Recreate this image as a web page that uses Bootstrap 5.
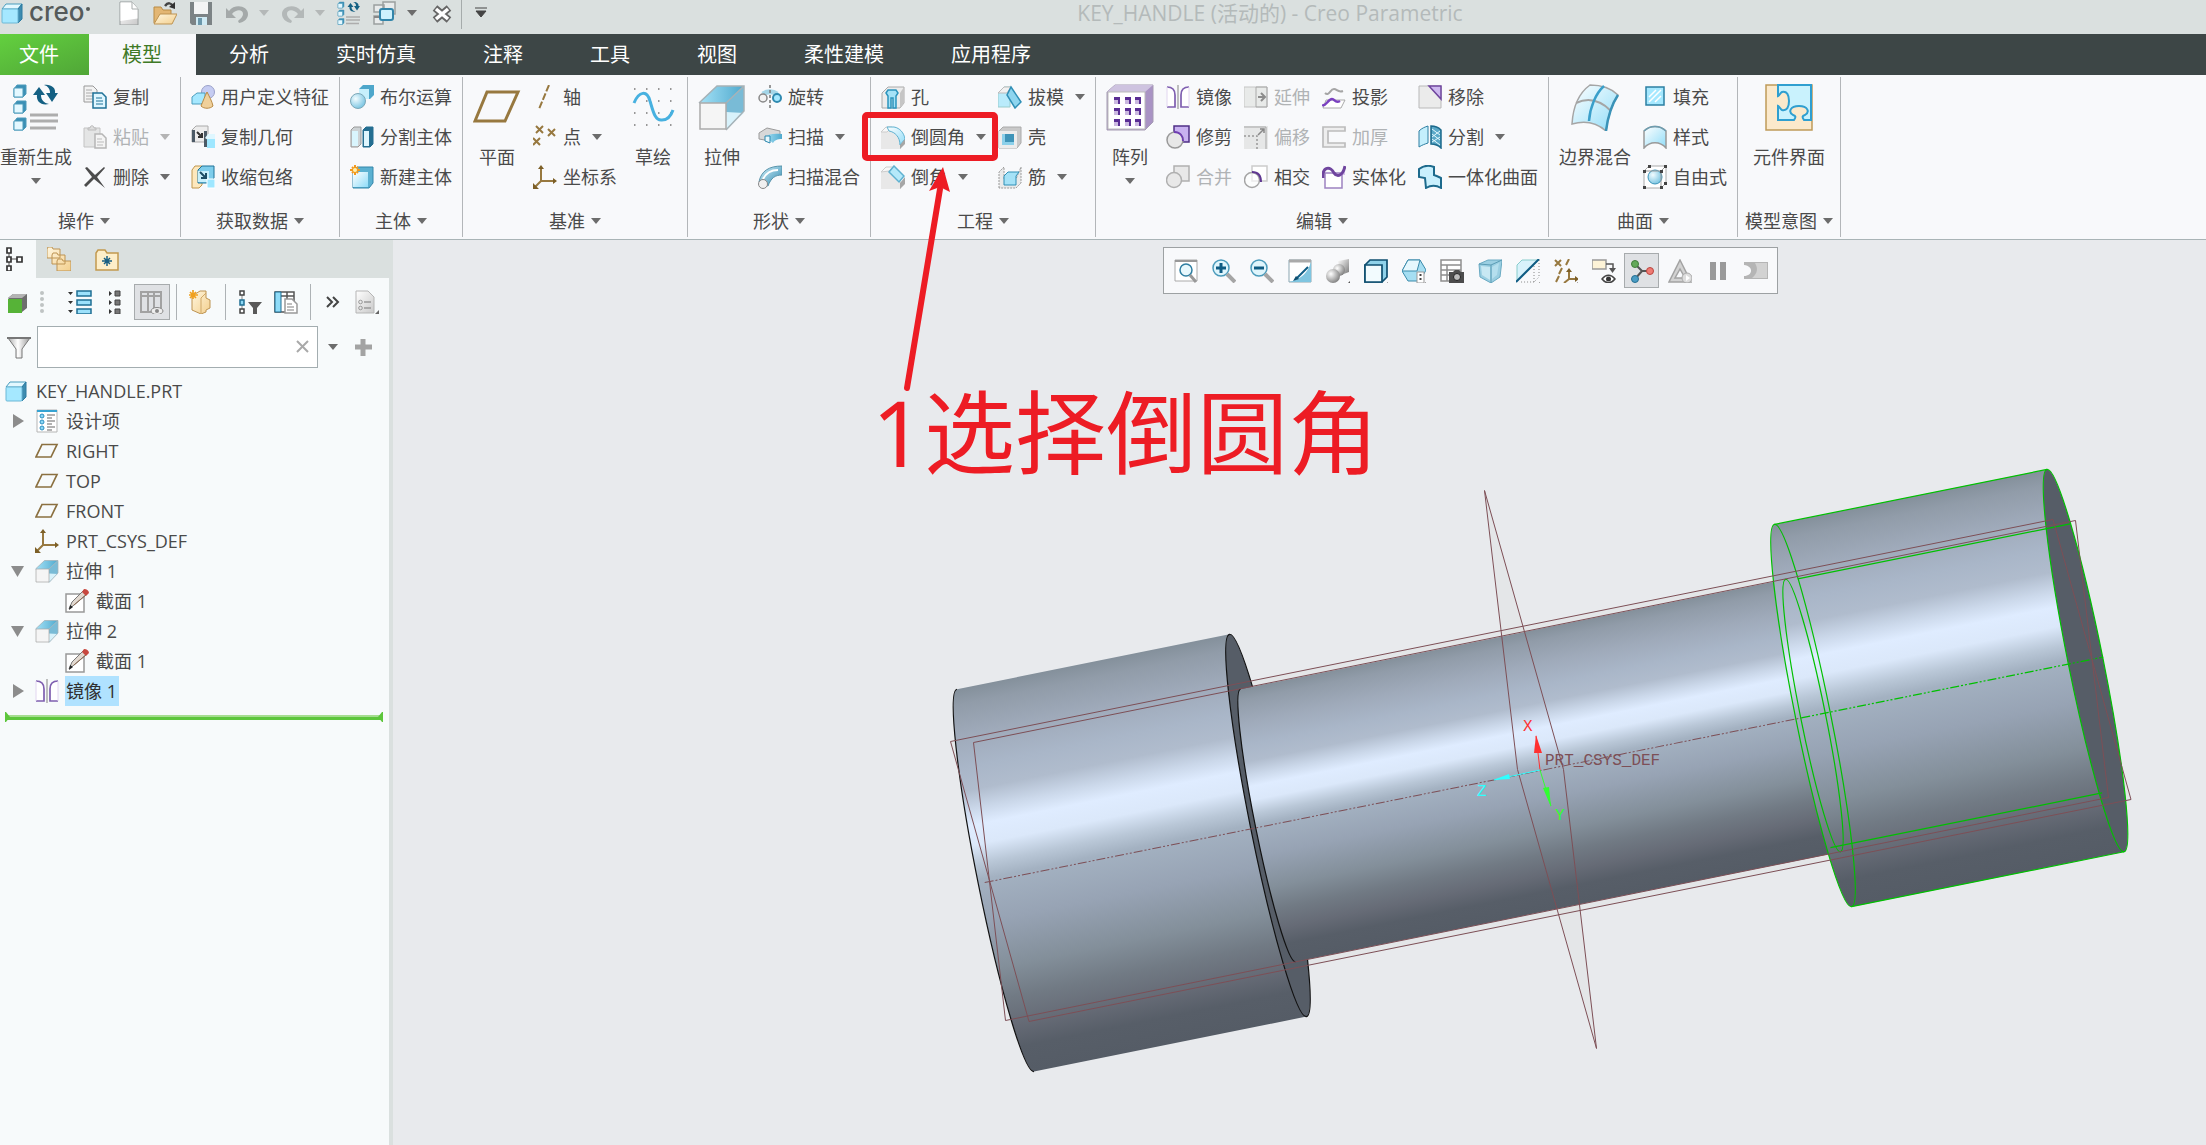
<!DOCTYPE html>
<html lang="zh-CN">
<head>
<meta charset="utf-8">
<meta name="viewport" content="width=device-width, initial-scale=1">
<title>KEY_HANDLE (活动的) - Creo Parametric</title>
<link href="https://cdn.jsdelivr.net/npm/bootstrap@5.3.0/dist/css/bootstrap.min.css" rel="stylesheet">
<style>
  :root { --chrome: #dae0df; --paper: #f8f9fb; --ink: #4a4a4a; --line: #a9b4b6; }
  body { font-family: "Open Sans", "Noto Sans CJK SC", sans-serif; font-size: 18px; line-height: 24px; color: var(--ink); background: var(--paper); }
  svg { display: block; flex: none; }
  .ic { width: 24px; height: 24px; }
  .ic-big { width: 48px; height: 48px; }
  .tri { width: 10px; height: 6px; background: #6c6c6c; clip-path: polygon(0 0, 100% 0, 50% 100%); flex: none; }
  .tri-off { background: #b4b8b8; }
  .plain { border: 0; padding: 0; background: none; color: inherit; font-size: 18px; line-height: 24px; border-radius: 0; }

  .titlebar { height: 34px; background: var(--chrome); padding-bottom: 8px; }
  .brand { gap: 5px; width: 117px; }
  .brand-word { font-family: Inter, sans-serif; font-size: 26px; font-weight: 500; line-height: 24px; color: #555a5a; padding-bottom: 3px; }
  .brand-dot { width: 4px; height: 4px; border-radius: 50%; background: #555a5a; margin: 0 0 9px -4px; }
  .quick { gap: 12px; }
  .quick .tri { margin-left: -2px; }
  .quick-rule { width: 1px; height: 32px; background: #a5abab; margin-left: -4px; }
  .doc-title { font-size: 21px; color: #b4baba; padding-right: 154px; }

  .ribbon-tabs { background: #3d4646; height: 41px; }
  .ribbon-tabs a { font-size: 20px; line-height: 40px; color: #fff; padding: 1px 34px 0 33px; text-decoration: none; }
  .ribbon-tabs a.file-tab { padding: 1px 30px 0 19px; background: linear-gradient(160deg, #63d03f, #50a637); }
  .ribbon-tabs a.on { background: var(--paper); color: #3f7a26; }

  .ribbon { background: var(--paper); border-bottom: 1px solid var(--line); padding: 2px 0; }
  .grp { border-right: 1px solid #b3b6b9; }
  .grp-body { gap: 12px; padding: 0 10px; height: 120px; }
  .grp-first .grp-body { padding: 0 10px 0 0; gap: 11px; }
  .grp-first .grp-name { margin-right: 12px; }
  .grp-name { height: 40px; gap: 6px; padding: 8px 7px 0; }
  .cmd { height: 40px; display: flex; align-items: center; gap: 6px; white-space: nowrap; }
  .cmd .tri { margin-left: 5px; }
  .cmd:disabled { color: #b0b3b5; opacity: 1; }
  .cmd:disabled .tri { background: #b4b4b4; }
  .cmd-big { display: flex; flex-direction: column; align-items: center; justify-content: flex-start; padding-top: 6px; min-width: 48px; white-space: nowrap; }
  .cmd-big span { margin-top: 14px; }
  .cmd-big .tri { margin-top: 9px; }

  .side { width: 393px; border-right: 4px solid var(--chrome); background: #f7fafb; }
  .side-tabs { height: 38px; background: var(--chrome); }
  .side-tabs button { width: 48px; padding-right: 2px; display: flex; justify-content: center; align-items: center; }
  .side-tabs .on { width: 36px; background: #f7fafb; padding-right: 8px; }
  .side-tools { height: 36px; margin-top: 6px; }
  .tool { width: 36px; height: 36px; display: flex; align-items: center; justify-content: center; }
  .tool-slim { width: 32px; }
  .tool-on { background: #dfe1e4; border: 1px solid #a7abad; }
  .tool-rule { width: 1px; background: #adb2b5; margin: 0 6px; }
  .grip { width: 26px; padding-left: 4px; }
  .filter { padding: 6px 0 8px 7px; gap: 6px; }
  .filter-box { width: 281px; }
  .filter-box input { height: 42px; border: 1px solid #a3adb0; border-radius: 0; font-size: 18px; }
  .filter-clear { right: 3px; top: 9px; }
  .tree li { height: 30px; display: flex; align-items: center; gap: 6px; padding-left: 35px; }
  .tree .root-item { padding-left: 4px; gap: 8px; }
  .tree .deep { padding-left: 65px; }
  .tree .has-arrow { padding-left: 11px; }
  .tree .arrow { width: 14px; height: 14px; margin-right: 4px; }
  .tree .tag { padding: 0 2px 0 1px; line-height: 30px; }
  .tree .picked { background: #b0e2ff; color: #2f2f2f; }
  .insert-mark { width: 378px; height: 10px; margin: 6px 0 0 5px; }

  .stage { background: #e8eaed; overflow: hidden; }
  .view-bar { position: absolute; left: 770px; top: 7px; background: var(--paper); border: 1px solid #9da1a3; padding: 5px 4px; gap: 3px; }
  .view-bar .tool { width: 35px; height: 35px; }
  .note { position: absolute; left: 479px; top: 132px; font-family: "Noto Sans", "Noto Sans CJK SC", sans-serif; font-size: 91px; line-height: 120px; color: #ed1c24; white-space: nowrap; }
  .note-arrow { position: absolute; left: 860px; top: 105px; pointer-events: none; }
</style>
<script src="https://cdn.jsdelivr.net/npm/bootstrap@5.3.0/dist/js/bootstrap.bundle.min.js"></script>
</head>
<body class="d-flex flex-column min-vh-100 position-relative">

<svg width="0" height="0" class="position-absolute" aria-hidden="true">
  <defs>
    <linearGradient id="gBlue" x1="0" y1="0" x2="1" y2="1"><stop offset="0" stop-color="#fff"/><stop offset="1" stop-color="#8fdcf8"/></linearGradient>
    <linearGradient id="gSky" x1="0" y1="0" x2="1" y2="0"><stop offset="0" stop-color="#a5e2f7"/><stop offset="1" stop-color="#4fa9cd"/></linearGradient>
    <linearGradient id="gGray" x1="0" y1="0" x2="1" y2="1"><stop offset="0" stop-color="#fff"/><stop offset="1" stop-color="#c9c9c9"/></linearGradient>
    <linearGradient id="gMetal" x1="0" y1="0" x2="1" y2="1"><stop offset="0" stop-color="#fff"/><stop offset="1" stop-color="#777"/></linearGradient>
    <linearGradient id="gFunnel" x1="0" y1="0" x2="1" y2="0"><stop offset="0" stop-color="#aaa"/><stop offset=".45" stop-color="#fff"/><stop offset="1" stop-color="#999"/></linearGradient>
    <linearGradient id="gTan" x1="0" y1="0" x2="1" y2="1"><stop offset="0" stop-color="#fff6df"/><stop offset="1" stop-color="#f3cf8d"/></linearGradient>
    <linearGradient id="gDeep" x1="0" y1="0" x2="1" y2="1"><stop offset="0" stop-color="#d8f4fd"/><stop offset="1" stop-color="#2b87ae"/></linearGradient>
    <radialGradient id="gBall" cx=".35" cy=".35" r=".75"><stop offset="0" stop-color="#f2fcff"/><stop offset="1" stop-color="#6fc0df"/></radialGradient>
    <radialGradient id="gBallG" cx=".35" cy=".35" r=".75"><stop offset="0" stop-color="#fff"/><stop offset="1" stop-color="#777"/></radialGradient>

    <symbol id="part" viewBox="0 0 24 24"><path d="M2 8l4-5h16l-4 5z" fill="#e3f8ff" stroke="#4a9dbd"/><path d="M18 8l4-5v15l-4 4z" fill="#3e8cb0" stroke="#2c7ba1"/><rect x="2" y="8" width="16" height="14" rx="1" fill="#a5e8ff" stroke="#6cb8d6"/></symbol>
    <symbol id="newfile" viewBox="0 0 24 24"><path d="M3 1h12l6 7v16H3z" fill="url(#gGray)" stroke="#979c9c"/><path d="M3.500 1.500h11.500v6h5.500v10L3.500 20z" fill="#fff"/><path d="M15 1v7h6" fill="#fff" stroke="#a8adad"/></symbol>
    <symbol id="open" viewBox="0 0 24 24"><path d="M1 22V6h7l2 3h8v4" fill="#e3b673" stroke="#b98b45"/><path d="M1 23l6-10h17l-5 10z" fill="url(#gTan)" stroke="#bd9352"/><path d="M12 5c3-4 6-3 8 0" fill="none" stroke="#444" stroke-width="2.500"/><path d="M22 1v7l-6-2z" fill="#333"/></symbol>
    <symbol id="save" viewBox="0 0 24 24"><path d="M1 1h22v23H3l-2-2z" fill="#7c8385"/><path d="M5 1h14v12H5z" fill="#f3f4f4"/><path d="M7 16h11v8H7z" fill="#cfeaf3"/><path d="M9 17h4v7H9z" fill="#6c98ab"/></symbol>
    <symbol id="undo" viewBox="0 0 24 24"><path d="M1 7v10h10l-4-4c4-5 11-5 11 0 0 3-3 5-5 7l1 2c6-1 9-5 9-9 0-8-13-11-19-3z" fill="#a4a9a9"/></symbol>
    <symbol id="redo" viewBox="0 0 24 24"><path d="M23 7v10H13l4-4c-4-5-11-5-11 0 0 3 3 5 5 7l-1 2c-6-1-9-5-9-9 0-8 13-11 19-3z" fill="#b3b8b8"/></symbol>
    <symbol id="regen" viewBox="0 0 48 48"><g stroke="#4d9bbb"><path d="M2 6l3-4h9v9l-3 3H2zM2 22l3-4h9v9l-3 3H2zM2 39l3-4h9v9l-3 3H2z" fill="#3b8fb5"/><path d="M2 5h9v9H2zM2 21h9v9H2zM2 38h9v9H2z" fill="#e4f8ff"/></g><path d="M21 12l6-8 6 8h-4c0 5 3 8 8 9-8 2-13-3-12-9zM46 10l-6 9-6-9h4c0-4-2-7-6-8 7-1 12 3 11 8z" fill="#146083"/><path d="M18 32h28M18 38h28M18 45h26" stroke="#adadad" stroke-width="3"/></symbol>
    <symbol id="wins" viewBox="0 0 24 24"><g fill="#e8ebeb" stroke="#9aa0a0" stroke-width="1.500"><path d="M10 1h12v12H10zM1 4h10v7H1zM1 15h9v8H1z"/></g><path d="M1 16h9" stroke="#888" stroke-width="2"/><rect x="7" y="8" width="13" height="11" rx="2" fill="#cdf1fd" stroke="#3285aa" stroke-width="2"/></symbol>
    <symbol id="shut" viewBox="0 0 24 24"><path d="M6 7l14 12M20 7L6 19" stroke="#666" stroke-width="7"/><path d="M7 8l12 10M19 8L7 18" stroke="#fff" stroke-width="3.500"/></symbol>

    <symbol id="copy" viewBox="0 0 24 24"><path d="M1 1h9l4 4v12H1z" fill="#f3f3f3" stroke="#999"/><path d="M3 5h6M3 8h8M3 11h7M3 14h6" stroke="#aaa"/><path d="M10 8h9l4 4v11H10z" fill="#dff6ff" stroke="#1f7298" stroke-width="1.500"/><path d="M13 13h6M13 16h7M13 19h7" stroke="#1f7298"/></symbol>
    <symbol id="paste" viewBox="0 0 24 24"><path d="M1 3h16v19H1z" fill="#e4e5e5" stroke="#c3c3c3"/><path d="M5 5V3h2c0-3 4-3 4 0h2v2z" fill="#ddd" stroke="#bbb"/><path d="M12 9h7l4 4v10H12z" fill="#f4f4f4" stroke="#b5b5b5" stroke-width="1.500"/><path d="M14 14h5M14 17h7M14 20h6" stroke="#bbb"/></symbol>
    <symbol id="del" viewBox="0 0 24 24"><path d="M2 3l2-1 8 8 9-8 1 1-8 9 8 11-11-9-8 8-2-2 8-8z" fill="#4c4c4c"/></symbol>
    <symbol id="udf" viewBox="0 0 24 24"><circle cx="17" cy="7" r="6.500" fill="#c5ccf2" stroke="#9aa0c8"/><path d="M1 12l5-4h8v8l-4 3H1z" fill="#a5e8ff" stroke="#4c9dbd"/><path d="M16 7c2 4 5 9 6 14-3 3-9 3-12 0 2-5 4-10 6-14z" fill="#efd09b" stroke="#b98b45"/></symbol>
    <symbol id="copygeo" viewBox="0 0 24 24"><path d="M1 5l4-4h12v12l-3 4H1z" fill="#ececec" stroke="#aaa"/><path d="M1 5h3v12H1zM13 6h3v16h-3z" fill="#4c5a66"/><path d="M6 7l5 5M11 8v4H7" stroke="#333" stroke-width="2" fill="none"/><path d="M14 13l3-4h7v6h-7z" fill="#dff7ff"/><path d="M16 14h8v9h-8z" fill="#9fe7ff"/></symbol>
    <symbol id="shrink" viewBox="0 0 24 24"><path d="M1 5l3-4h7v19l-3 3H1z" fill="#fde8bd" stroke="#c0964c"/><path d="M7 5l4-4h12v12l-4 5H7z" fill="#7ecdeb" stroke="#1f7298"/><path d="M7 6h11v11H7z" fill="#c8f0fc"/><path d="M9 7l6 6M15 8v5h-5" stroke="#1d4e66" stroke-width="2" fill="none"/><path d="M16 14h8v9h-8z" fill="#9fe7ff" stroke="#fff"/></symbol>
    <symbol id="bool" viewBox="0 0 24 24"><path d="M9 4l4-4h11v10l-4 4H9z" fill="#4ea7cb"/><path d="M9 4h10v10H9z" fill="#c7f0fc"/><circle cx="8" cy="16" r="7.500" fill="url(#gBall)" stroke="#7da8b8"/></symbol>
    <symbol id="split" viewBox="0 0 24 24"><path d="M1 5l3-3h7v17l-3 3H1z" fill="#cdd2d4" stroke="#999"/><path d="M2 6h6v15H2z" fill="#d9f5fd"/><path d="M13 5l3-3h7v17l-3 3h-7z" fill="#246e91" stroke="#246e91"/><path d="M14 6h5v15h-5z" fill="#def6fe"/></symbol>
    <symbol id="newbody" viewBox="0 0 24 24"><path d="M3 7l4-5h16v16l-4 5H3z" fill="#5bb1d1" stroke="#3587aa"/><path d="M3 7h15v15H3z" fill="url(#gBlue)"/><path d="M5 0v10M0 5h10M2 2l6 6M8 2L2 8" stroke="#f39a1d" stroke-width="2"/><circle cx="5" cy="5" r="2" fill="#fff3b0"/></symbol>

    <symbol id="plane" viewBox="0 0 48 48"><path d="M14 9h31L32 38H2z" fill="none" stroke="#97783f" stroke-width="3"/></symbol>
    <symbol id="axis" viewBox="0 0 24 24"><path d="M16 0L6 24" stroke="#97783f" stroke-width="2" stroke-dasharray="7 2"/></symbol>
    <symbol id="points" viewBox="0 0 24 24"><path d="M3 1l7 7M10 1L3 8M15 4l7 7M22 4l-7 7M0 13l7 7M7 13l-7 7" stroke="#97783f" stroke-width="2"/></symbol>
    <symbol id="csys" viewBox="0 0 24 24"><path d="M8 2v14h14M8 16l-6 6" stroke="#97783f" stroke-width="2" fill="none"/><path d="M5 4l3-4 3 4zM20 13l4 3-4 3zM0 24v-6l6 6z" fill="#7c5f27"/></symbol>
    <symbol id="sketch" viewBox="0 0 48 48"><path d="M5 6h40M5 18h40M5 30h40M5 42h40" stroke="#777" stroke-width="1.500" stroke-dasharray="1.500 10.500"/><path d="M5 20C10 8 18 7 21 18c3 10 5 20 12 19 5 0 9-4 11-10" fill="none" stroke="#47b1e0" stroke-width="3"/></symbol>
    <symbol id="extrude" viewBox="0 0 48 48"><path d="M1 20L19 3h27v25L28 47z" fill="#def3fa"/><path d="M19 3h27L28 20H1z" fill="url(#gSky)"/><path d="M46 3v25L28 47V20z" fill="#79bbd6"/><path d="M46 30L28 29v18z" fill="#d8f2fb"/><path d="M1 20L19 3h27v25L28 47M46 3L28 20" fill="none" stroke="#a6b2b7" stroke-width="1.500"/><path d="M2 20h26v26H2z" fill="#f5f5f5" stroke="#aaa" stroke-width="1.500"/></symbol>
    <symbol id="revolve" viewBox="0 0 24 24"><path d="M5 9c4-3 10-3 14 0" fill="none" stroke="#a5d6e8" stroke-width="5"/><circle cx="5" cy="13" r="4" fill="#f3f3f3" stroke="#888" stroke-width="1.500"/><circle cx="19" cy="13" r="4" fill="#a5e8ff" stroke="#2f8ab0" stroke-width="2"/><path d="M12 0v24" stroke="#777" stroke-width="1.500" stroke-dasharray="3 2"/></symbol>
    <symbol id="sweep" viewBox="0 0 24 24"><path d="M1 8l8-5 13 3v4h-8l-2 6-11-2z" fill="#d8d8d8" stroke="#9a9a9a"/><path d="M7 12c3-3 9-4 17-3v5c-5 0-7 1-9 4z" fill="url(#gSky)"/><path d="M7 11h5v7l-5-2z" fill="#e7f8fd" stroke="#2b87ae"/></symbol>
    <symbol id="sweepblend" viewBox="0 0 24 24"><path d="M1 17C3 6 11 1 24 1v9c-7 0-11 3-14 11z" fill="url(#gDeep)" stroke="#5994ab"/><path d="M5 14c3-6 8-9 15-9" stroke="#fff" stroke-width="2" fill="none"/><circle cx="5" cy="19" r="4.500" fill="#f0f0f0" stroke="#888"/></symbol>

    <symbol id="hole" viewBox="0 0 24 24"><path d="M1 8l6-6h16v16l-4 5H1z" fill="#ececec" stroke="#aaa"/><path d="M19 8l4-6v16l-4 5z" fill="#c5c5c5"/><path d="M5 8l2-3h8l2 3-2 3v12h-3V13h-2v10H7V11z" fill="#a5e2f7" stroke="#2b94bd" stroke-width="1.500"/></symbol>
    <symbol id="round" viewBox="0 0 24 24"><path d="M0 7l5-5h6l9 8v14H0z" fill="#e8e8e8"/><path d="M0 7l5-5h6l-5 5z" fill="#f8f8f8" stroke="#ccc"/><path d="M6 2h7c6 1 10 6 11 12l-5 6C19 12 14 7 8 6z" fill="url(#gBlue)" stroke="#5fb1d0"/><path d="M24 14l-5 6v4l5-5z" fill="#a6a6a6"/></symbol>
    <symbol id="chamfer" viewBox="0 0 24 24"><path d="M0 7l5-5h7l8 9v13H0z" fill="#e8e8e8"/><path d="M0 7l5-5h7l-4 4z" fill="#f8f8f8" stroke="#ccc"/><path d="M13 1l10 10-5 6L8 7z" fill="#b5e9fa" stroke="#5fb1d0" stroke-width="1.500"/><path d="M24 12l-5 6v6l5-5z" fill="#a6a6a6"/></symbol>
    <symbol id="draft" viewBox="0 0 24 24"><path d="M0 22V8l6-6h6v20z" fill="#b9ebfb" stroke="#9cc"/><path d="M0 8l6-6h7l-4 6z" fill="#f1f1f1" stroke="#bbb"/><path d="M13 2l10 15-6 6-8-13z" fill="#8ed5ef" stroke="#2f8fb6" stroke-width="1.500"/></symbol>
    <symbol id="shell" viewBox="0 0 24 24"><path d="M1 6l4-4h18v16l-4 5H1z" fill="#c9c9c9" stroke="#aaa"/><path d="M1 6h18v17H1z" fill="#ececec"/><path d="M4 9h12v11H4z" fill="#8cd0ea"/><path d="M7 9h9v8H7z" fill="#3f94b8"/></symbol>
    <symbol id="rib" viewBox="0 0 24 24"><path d="M1 23V7l5-5v12h12l5-12v16l-5 5z" fill="#eaeaea" stroke="#999" stroke-dasharray="2 1"/><path d="M6 11l4-4h11l-3 4v9H6z" fill="#a5e2f7" stroke="#2f8fb6"/></symbol>

    <symbol id="pattern" viewBox="0 0 48 48"><path d="M1 9l8-7h38v37l-8 8H1z" fill="#a993c4" stroke="#a59bb3"/><path d="M1 9l8-7h38l-8 7z" fill="#cec3e0"/><path d="M2 9h37v37H2z" fill="#fff" stroke="#bbb"/><g fill="#5a2e94"><path d="M8 14h6v7H8zM19 14h6v7h-6zM29 14h6v7h-6zM8 25h6v7H8zM19 25h6v7h-6zM29 25h6v7h-6zM8 36h6v7H8zM19 36h6v7h-6zM29 36h6v7h-6z"/></g><g fill="#cbb9e0"><path d="M8 17h4v4H8zM19 17h4v4h-4zM29 17h4v4h-4zM8 28h4v4H8zM19 28h4v4h-4zM29 28h4v4h-4zM8 39h4v4H8zM19 39h4v4h-4zM29 39h4v4h-4z"/></g></symbol>
    <symbol id="mirror" viewBox="0 0 24 24"><path d="M1 2c5 0 8 3 8 8v12H1" fill="#fff" stroke="#7f5fb0" stroke-width="1.700"/><path d="M23 2c-5 0-8 3-8 8v12h8" fill="#fff" stroke="#7f5fb0" stroke-width="1.700"/><path d="M1 2v20M23 2v20" stroke="#e2d6f0"/><path d="M12 0v24" stroke="#aaa" stroke-width="1.500"/></symbol>
    <symbol id="trim" viewBox="0 0 24 24"><path d="M8 1h15v16H8z" fill="#c8b1f0" stroke="#4f2f86" stroke-width="1.500"/><circle cx="9" cy="15" r="8" fill="#e7e7e7" stroke="#999" stroke-width="1.500"/><path d="M8 7c6 0 9 4 9 9" stroke="#6f3db3" stroke-width="2" fill="none"/></symbol>
    <symbol id="merge" viewBox="0 0 24 24"><path d="M8 1h15v15H8z" fill="#e8e8e8" stroke="#b0b0b0" stroke-width="1.500"/><circle cx="8" cy="15" r="7.500" fill="#e8e8e8" stroke="#b0b0b0" stroke-width="1.500"/></symbol>
    <symbol id="extend" viewBox="0 0 24 24"><path d="M0 2h23v20H0z" fill="#e8eae9" stroke="#c5c5c5"/><path d="M12 2h11v20H12z" fill="none" stroke="#aaa"/><path d="M14 12h6M17 8l4 4-4 4" stroke="#8c8c8c" stroke-width="2" fill="none"/></symbol>
    <symbol id="offset" viewBox="0 0 24 24"><path d="M0 1h24v23H0z" fill="#e6e7e7"/><path d="M0 2h22v22" fill="none" stroke="#a5a5a5"/><path d="M0 11h13v13" fill="none" stroke="#999" stroke-width="1.500" stroke-dasharray="2 2"/><path d="M14 10l6-6M16 4h4v4" stroke="#888" fill="none" stroke-width="1.500"/></symbol>
    <symbol id="meet" viewBox="0 0 24 24"><path d="M8 1h15v15H8z" fill="#fff" stroke="#ccc" stroke-width="1.500"/><circle cx="8" cy="15" r="7.500" fill="#fff" fill-opacity=".6" stroke="#a5a5a5" stroke-width="1.500"/><path d="M8 7c6 0 9 4 9 10" stroke="#5f3791" stroke-width="2" fill="none"/></symbol>
    <symbol id="project" viewBox="0 0 24 24"><path d="M3 8c4 4 5-4 9-4 3 0 4 4 9 2" stroke="#a5a5a5" stroke-width="2" fill="none"/><path d="M4 15l-3 8h18l4-8z" fill="#fff" stroke="#aaa"/><path d="M0 20c4 2 6-6 10-6 3 0 3 5 8 2" stroke="#7a40c0" stroke-width="2.500" fill="none"/></symbol>
    <symbol id="thicken" viewBox="0 0 24 24"><path d="M23 2H1v20h22v-4H6V6h17z" fill="#eee" stroke="#bcbcbc" stroke-width="1.700"/></symbol>
    <symbol id="solid" viewBox="0 0 24 24"><path d="M3 23V8h17v15z" fill="#fff" stroke="#9d83c1" stroke-width="1.500"/><path d="M12 9c5 5 9 2 11-8v9h-3v1h-8z" fill="#d6c4ea"/><path d="M1 13C0 1 9 1 12 8c4 5 9 2 11-7" fill="none" stroke="#6f459e" stroke-width="3"/></symbol>
    <symbol id="remove" viewBox="0 0 24 24"><path d="M1 1h22v22H1z" fill="#ebebeb" stroke="#b9b9b9"/><path d="M11 1h12v13z" fill="#cdb8ef" stroke="#6f459e" stroke-width="1.500"/></symbol>
    <symbol id="divide" viewBox="0 0 24 24"><path d="M1 22V6c3-3 6-4 9-5v17c-3 1-6 2-9 4z" fill="#c4effc" stroke="#2f7fa2"/><path d="M13 1c4 0 7 1 10 4v18c-3-3-6-4-10-4z" fill="#5ba9c8" stroke="#1d6a8c" stroke-width="1.500"/><path d="M14 4l8 6M14 9l8 6M14 14l8 6M22 6l-8 6M22 12l-8 5" stroke="#e5f8fe"/></symbol>
    <symbol id="unify" viewBox="0 0 24 24"><path d="M1 4c4-3 10-4 15-2v8c3 1 5 2 7 3v10c-5-3-10-3-15 0l-1-10-6-1z" fill="#c9f0fd" stroke="#1d6a8c" stroke-width="2"/></symbol>

    <symbol id="boundary" viewBox="0 0 48 48"><path d="M1 41C2 24 8 10 19 2c10 0 20 2 28 10-6 9-10 20-12 36-9-8-20-11-34-7z" fill="url(#gBlue)" stroke="#a5a5a5" stroke-width="1.500"/><path d="M5 20c13-6 25-2 35 8" fill="none" stroke="#a5a5a5" stroke-width="2"/><path d="M18 38C19 24 25 10 33 3" fill="none" stroke="#3a9fca" stroke-width="2.500"/><path d="M47 12c-6 9-10 20-12 36" fill="none" stroke="#3a93b8" stroke-width="2.500"/></symbol>
    <symbol id="fillsurf" viewBox="0 0 24 24"><path d="M3 2h18v18H3z" fill="#a5e8ff" stroke="#2b7fa3" stroke-width="1.500"/><path d="M6 12l7-7M6 17L18 5M12 17l6-6" stroke="#fff" stroke-width="1.500"/></symbol>
    <symbol id="style" viewBox="0 0 24 24"><path d="M1 6c6-6 16-6 22 0v17c-6-7-16-7-22 0z" fill="url(#gBlue)" stroke="#999" stroke-width="1.500"/><path d="M1 6c6-6 16-6 22 0" fill="none" stroke="#6d9db0" stroke-width="1.500"/></symbol>
    <symbol id="freestyle" viewBox="0 0 24 24"><path d="M1 6l5-5h17v17l-5 5H1z" fill="#fff" stroke="#aaa"/><circle cx="12" cy="12" r="7" fill="url(#gBall)" stroke="#3a93b8"/><path d="M1 6h17v17M18 6l5-5" fill="none" stroke="#999"/><path d="M0 5h3v3H0zM17 5h3v3h-3zM0 21h3v3H0zM17 21h3v3h-3zM21 0h3v3h-3zM21 17h3v3h-3zM5 0h3v3H5z" fill="#444"/></symbol>
    <symbol id="iface" viewBox="0 0 48 48"><path d="M1 2h46v45H1z" fill="#fbe9cb" stroke="#bf9a5a" stroke-width="1.500"/><path d="M13 2h33v35h-7c-2-3-2-4 1-5 5-3 3-9-6-9s-11 6-6 9c3 1 3 2 1 5H13V23c2 1 2 3 4 4 5 1 7-3 7-9s-2-10-7-9c-2 1-2 3-4 4z" fill="#c9f2fd" stroke="#2f9fd0" stroke-width="2"/></symbol>

    <symbol id="tabtree" viewBox="0 0 24 24"><path d="M7 5v14M7 12h10" stroke="#888" stroke-width="1.500"/><g fill="#fff" stroke="#333" stroke-width="1.700"><path d="M5 1h4v5H5zM5 10h4v5H5zM5 19h4v5H5zM15 10h5v5h-5z"/></g></symbol>
    <symbol id="layers" viewBox="0 0 24 24"><g fill="url(#gTan)" stroke="#bd9352"><path d="M0 2l1-2h4l1 2h7v9H0zM5 8l1-2h4l1 2h7v9H5zM10 14l1-2h4l1 2h8v10H10z"/></g></symbol>
    <symbol id="favs" viewBox="0 0 24 24"><path d="M1 23V6l2-3h7l2 3h11v17z" fill="#fdeec9" stroke="#c2994f" stroke-width="1.500"/><path d="M12 9v10M7 14h10M9 11l6 6M15 11l-6 6" stroke="#195f83" stroke-width="1.500"/></symbol>
    <symbol id="gcube" viewBox="0 0 24 24"><path d="M2 8l5-4h14v14l-5 4z" fill="#6e6e6e"/><path d="M2 8l5-4h14l-5 4z" fill="#b3b3b3"/><path d="M2 9h14v14H2z" fill="#56b337"/></symbol>
    <symbol id="expand" viewBox="0 0 24 24"><g fill="#9ce1fb" stroke="#1f6f94" stroke-width="1.500"><path d="M9 1h14v5H9zM9 10h14v5H9zM9 19h14v5H9z"/></g><path d="M0 2h5L2.500 5zM0 11h5l-2.500 3zM0 20h5l-2.500 3z" fill="#333"/></symbol>
    <symbol id="collapse" viewBox="0 0 24 24"><g fill="#777" stroke="#444"><path d="M11 1h5v5h-5zM11 10h5v5h-5zM11 19h5v5h-5z"/></g><path d="M5 1v5l3-2.500zM5 10v5l3-2.500zM5 19v5l3-2.500z" fill="#333"/></symbol>
    <symbol id="cols" viewBox="0 0 24 24"><path d="M1 2h20v20H1zM1 6h20M8 2v20M14 2v20" fill="none" stroke="#a2a2a2" stroke-width="2"/><ellipse cx="17" cy="21" rx="6" ry="3.500" fill="#eee" stroke="#888"/><circle cx="17" cy="21" r="2" fill="#888"/></symbol>
    <symbol id="newbox" viewBox="0 0 24 24"><path d="M3 6l8-5h6v7l4 2v8l-4 2v2l-5 2-9-4z" fill="url(#gTan)" stroke="#bd9352"/><path d="M12 24V8l5-5" fill="none" stroke="#cfa766"/><path d="M4 0v9M0 5h9M1 2l6 6M7 2L1 8" stroke="#f0a01e" stroke-width="1.700"/></symbol>
    <symbol id="treefilt" viewBox="0 0 24 24"><path d="M4 5v15" stroke="#888"/><g fill="#fff" stroke="#444" stroke-width="1.500"><path d="M2 1h4v4H2z"/><path d="M2 10h4v5H2z" fill="#8cd8f5" stroke="#1f6f94"/><path d="M2 19h4v4H2z"/></g><path d="M10 12h14l-5 6v6h-4v-6z" fill="#595959"/></symbol>
    <symbol id="treecols" viewBox="0 0 24 24"><path d="M1 2h19v20H1zM1 6h19M13 2v10" fill="#fff" stroke="#555" stroke-width="1.500"/><path d="M1 2h6v20H1z" fill="#8fdcf8" stroke="#1f6f94"/><path d="M11 9h7l5 5v9H11z" fill="#fff" stroke="#999" stroke-width="1.500"/><path d="M13 14h5M13 17h7M13 20h7" stroke="#aaa" stroke-width="1.500"/></symbol>
    <symbol id="prefs" viewBox="0 0 24 24"><path d="M1 1h12l6 6v16H1z" fill="url(#gGray)" stroke="#b5b5b5"/><circle cx="5.500" cy="12" r="1.800" fill="none" stroke="#999"/><circle cx="5.500" cy="18" r="1.800" fill="none" stroke="#999"/><path d="M9 12h7M9 18h7" stroke="#999" stroke-width="1.500"/><path d="M24 20v4h-4z" fill="#666"/></symbol>
    <symbol id="funnel" viewBox="0 0 24 24"><path d="M1 3h22l-8 11v9h-6v-9z" fill="url(#gFunnel)" stroke="#777"/><path d="M0 3h24" stroke="#777" stroke-width="2"/></symbol>
    <symbol id="design" viewBox="0 0 24 24"><path d="M2 1h20v22H2z" fill="#fff" stroke="#b5b5b5"/><path d="M2 2h20" stroke="#36a3d2" stroke-width="2"/><g fill="#8ad6f5" stroke="#2b8fc0"><circle cx="7" cy="7" r="2"/><circle cx="7" cy="13" r="2"/><circle cx="7" cy="19" r="2"/></g><path d="M12 6h8M12 9h5M12 12h8M12 15h5M12 18h8M12 21h5" stroke="#999" stroke-width="1.300"/></symbol>
    <symbol id="datum" viewBox="0 0 24 24"><path d="M7 5.500h15L16 18H1z" fill="none" stroke="#8b7040" stroke-width="1.700"/></symbol>
    <symbol id="section" viewBox="0 0 24 24"><path d="M1 5h18v18H1z" fill="#fff" stroke="#999" stroke-width="1.500"/><path d="M4 20l3-7L19 1l4 3L9 16z" fill="#e2d9d0" stroke="#777"/><path d="M17 3l2-3c3 0 5 2 5 4l-3 3z" fill="#c8483f"/><path d="M9 16L21 6" stroke="#8f6a50"/><path d="M4 21l1-5 3 2z" fill="#222"/></symbol>

    <symbol id="refit" viewBox="0 0 24 24"><path d="M1 1h22v21H1z" fill="#fff" stroke="#aaa"/><path d="M1 2h22" stroke="#999" stroke-width="2"/><circle cx="12" cy="11" r="6" fill="#e8f8fd" stroke="#2f7fa2" stroke-width="1.500"/><path d="M16 16l6 7" stroke="#999" stroke-width="3"/></symbol>
    <symbol id="zoomin" viewBox="0 0 24 24"><circle cx="9" cy="9" r="8" fill="#dff5fc" stroke="#4b9bbb" stroke-width="1.500"/><path d="M4 9h10M9 4v10" stroke="#0f5c83" stroke-width="3"/><path d="M15 15l8 8" stroke="#a5a5a5" stroke-width="4"/></symbol>
    <symbol id="zoomout" viewBox="0 0 24 24"><circle cx="9" cy="9" r="8" fill="#dff5fc" stroke="#4b9bbb" stroke-width="1.500"/><path d="M4 9h10" stroke="#0f5c83" stroke-width="3"/><path d="M15 15l8 8" stroke="#a5a5a5" stroke-width="4"/></symbol>
    <symbol id="repaint" viewBox="0 0 24 24"><path d="M1 1h22v22H1z" fill="#fff" stroke="#8ba5b0"/><path d="M1 23C14 20 20 13 23 3v20z" fill="#7fc5e0"/><path d="M1 2h22" stroke="#aaa" stroke-width="3"/><path d="M20 8L9 19" stroke="#0f5c83" stroke-width="2"/><path d="M5 22l3-5 3 3z" fill="#0f4f70"/></symbol>
    <symbol id="render" viewBox="0 0 24 24"><path d="M12 2l11-2v13l-8 3z" fill="url(#gMetal)"/><circle cx="13" cy="11" r="6" fill="url(#gBallG)"/><circle cx="7" cy="17" r="7" fill="url(#gBallG)"/><path d="M26 20v6h-6z" fill="#555"/></symbol>
    <symbol id="shade" viewBox="0 0 24 24"><path d="M1 6l5-5h17v17l-5 5H1z" fill="#8fd2ea" stroke="#0f4f70" stroke-width="1.700"/><path d="M1 6h17v17H1z" fill="#f2fbfe" stroke="#0f4f70" stroke-width="1.700"/><path d="M26 21v5h-5z" fill="#555"/></symbol>
    <symbol id="saved" viewBox="0 0 24 24"><path d="M0 12L6 1h12l6 10-6 11H6z" fill="#a5def2" stroke="#3b8bab"/><path d="M6 1h12l-3 11H0z" fill="#e5f7fd" stroke="#3b8bab"/><path d="M15 13h7v11h-7z" fill="#fff" stroke="#999"/><path d="M18.500 15v2M18.500 19v2" stroke="#444" stroke-width="2"/><path d="M26 21v5h-5z" fill="#555"/></symbol>
    <symbol id="views" viewBox="0 0 24 24"><path d="M1 1h20v21H1zM1 6h20M1 11h20M1 16h12M7 6v16" fill="#fff" stroke="#8f8f8f" stroke-width="1.500"/><path d="M9 13h4l2-2h4l2 2h3v11H9z" fill="#4c4c4c"/><circle cx="17" cy="18" r="3.500" fill="#bbb" stroke="#222"/></symbol>
    <symbol id="persp" viewBox="0 0 24 24"><path d="M1 5l9-4 14 0-2 17-9 6-11-6z" fill="#9bcfe2" stroke="#6aaac2"/><path d="M1 5l12 1L24 1M13 6v18" fill="none" stroke="#5b9cb5"/><path d="M3 7l9 1v13l-8-5z" fill="#c8e8f3"/><path d="M14 8l7-4-2 12-5 4z" fill="#b5dfee"/></symbol>
    <symbol id="sections" viewBox="0 0 24 24"><path d="M1 6l5-5h17L1 22z" fill="#d8f2fb" stroke="#8cc"/><path d="M23 1v17l-5 5H3M18 7v16" stroke="#888" stroke-dasharray="1 2" fill="none"/><path d="M0 23L23 0" stroke="#0f5c83" stroke-width="2"/><path d="M26 21v5h-5z" fill="#555"/></symbol>
    <symbol id="datums" viewBox="0 0 24 24"><path d="M1 1l6 6M7 1L1 7M15 0l-3 6M8 9l-3 6M5 17l-3 6M15 12v8h8M15 20l-5 4" stroke="#97783f" stroke-width="2" fill="none"/><path d="M12 13l3-4 3 4zM21 17l4 3-4 3z" fill="#7c5f27"/><path d="M26 21v5h-5z" fill="#555"/></symbol>
    <symbol id="notes" viewBox="0 0 24 24"><path d="M0 1h14v9H0z" fill="#fdf3d7" stroke="#999" stroke-width="1.500"/><path d="M14 5h7v7" stroke="#555" fill="none" stroke-width="1.500"/><path d="M17 9h7l-3.500 5z" fill="#555"/><path d="M10 20c4-5 9-5 13 0-4 5-9 5-13 0z" fill="#fff" stroke="#444" stroke-width="1.500"/><circle cx="16.500" cy="20" r="2.500" fill="#333"/></symbol>
    <symbol id="spin" viewBox="0 0 24 24"><path d="M5 5l7 7 8 0M12 12l-7 8" stroke="#555" stroke-width="2" fill="none"/><circle cx="5" cy="5" r="3.500" fill="#63a95a" stroke="#3f7d3a"/><circle cx="20" cy="12" r="3.500" fill="#ef7b74" stroke="#b9453f"/><circle cx="5" cy="20" r="3.500" fill="#4a9cc4" stroke="#246e91"/></symbol>
    <symbol id="sim" viewBox="0 0 24 24"><path d="M12 1l11 22H1zM12 10l-5 9h10z" fill="#d2d2d2" fill-rule="evenodd" stroke="#a3a3a3" stroke-width="1.500"/><circle cx="19" cy="19" r="5" fill="#ddd" stroke="#aaa"/><path d="M18 16l4 3-4 3z" fill="#fff"/></symbol>
    <symbol id="pause" viewBox="0 0 24 24"><path d="M4 3h6v18H4zM14 3h6v18h-6z" fill="#9a9a9a"/></symbol>
    <symbol id="result" viewBox="0 0 24 24"><path d="M0 3h24v17H0v-3c9 0 10-10 0-11z" fill="#b5b5b5"/><path d="M11 4h12v15H8c6-5 6-10 3-15z" fill="#d2d2d2"/></symbol>
  </defs>
</svg>

<header>
  <div class="titlebar d-flex align-items-center">
    <div class="brand d-flex align-items-center"><svg class="ic"><use href="#part"/></svg><span class="brand-word">creo</span><i class="brand-dot"></i></div>
    <div class="quick d-flex align-items-center">
      <button class="btn plain" aria-label="新建"><svg class="ic"><use href="#newfile"/></svg></button>
      <button class="btn plain" aria-label="打开"><svg class="ic"><use href="#open"/></svg></button>
      <button class="btn plain" aria-label="保存"><svg class="ic"><use href="#save"/></svg></button>
      <button class="btn plain" aria-label="撤销"><svg class="ic"><use href="#undo"/></svg></button>
      <i class="tri tri-off"></i>
      <button class="btn plain" aria-label="重做"><svg class="ic"><use href="#redo"/></svg></button>
      <i class="tri tri-off"></i>
      <button class="btn plain" aria-label="重新生成"><svg class="ic"><use href="#regen"/></svg></button>
      <button class="btn plain" aria-label="窗口"><svg class="ic"><use href="#wins"/></svg></button>
      <i class="tri"></i>
      <button class="btn plain" aria-label="关闭"><svg class="ic"><use href="#shut"/></svg></button>
      <i class="quick-rule"></i>
      <button class="btn plain" aria-label="自定义快速访问"><svg width="14" height="12"><path d="M1 1h12M2 4h10l-5 6z" fill="#444" stroke="#444"/></svg></button>
    </div>
    <div class="doc-title flex-grow-1 text-center">KEY_HANDLE (活动的) - Creo Parametric</div>
  </div>
  <nav class="ribbon-tabs d-flex">
    <a href="#" class="file-tab">文件</a><a href="#" class="on">模型</a><a href="#">分析</a><a href="#">实时仿真</a><a href="#">注释</a><a href="#">工具</a><a href="#">视图</a><a href="#">柔性建模</a><a href="#">应用程序</a>
  </nav>
  <div class="ribbon d-flex">
    <section class="grp grp-first">
      <div class="grp-body d-flex">
        <button class="btn plain cmd-big"><svg class="ic-big"><use href="#regen"/></svg><span>重新生成</span><i class="tri"></i></button>
        <div>
          <button class="btn plain cmd"><svg class="ic"><use href="#copy"/></svg>复制</button>
          <button class="btn plain cmd" disabled><svg class="ic"><use href="#paste"/></svg>粘贴<i class="tri"></i></button>
          <button class="btn plain cmd"><svg class="ic"><use href="#del"/></svg>删除<i class="tri"></i></button>
        </div>
      </div>
      <div class="grp-name d-flex align-items-center justify-content-center">操作<i class="tri"></i></div>
    </section>
    <section class="grp">
      <div class="grp-body d-flex"><div>
        <button class="btn plain cmd"><svg class="ic"><use href="#udf"/></svg>用户定义特征</button>
        <button class="btn plain cmd"><svg class="ic"><use href="#copygeo"/></svg>复制几何</button>
        <button class="btn plain cmd"><svg class="ic"><use href="#shrink"/></svg>收缩包络</button>
      </div></div>
      <div class="grp-name d-flex align-items-center justify-content-center">获取数据<i class="tri"></i></div>
    </section>
    <section class="grp">
      <div class="grp-body d-flex"><div>
        <button class="btn plain cmd"><svg class="ic"><use href="#bool"/></svg>布尔运算</button>
        <button class="btn plain cmd"><svg class="ic"><use href="#split"/></svg>分割主体</button>
        <button class="btn plain cmd"><svg class="ic"><use href="#newbody"/></svg>新建主体</button>
      </div></div>
      <div class="grp-name d-flex align-items-center justify-content-center">主体<i class="tri"></i></div>
    </section>
    <section class="grp">
      <div class="grp-body d-flex">
        <button class="btn plain cmd-big"><svg class="ic-big"><use href="#plane"/></svg><span>平面</span></button>
        <div>
          <button class="btn plain cmd"><svg class="ic"><use href="#axis"/></svg>轴</button>
          <button class="btn plain cmd"><svg class="ic"><use href="#points"/></svg>点<i class="tri"></i></button>
          <button class="btn plain cmd"><svg class="ic"><use href="#csys"/></svg>坐标系</button>
        </div>
        <button class="btn plain cmd-big"><svg class="ic-big"><use href="#sketch"/></svg><span>草绘</span></button>
      </div>
      <div class="grp-name d-flex align-items-center justify-content-center">基准<i class="tri"></i></div>
    </section>
    <section class="grp">
      <div class="grp-body d-flex">
        <button class="btn plain cmd-big"><svg class="ic-big"><use href="#extrude"/></svg><span>拉伸</span></button>
        <div>
          <button class="btn plain cmd"><svg class="ic"><use href="#revolve"/></svg>旋转</button>
          <button class="btn plain cmd"><svg class="ic"><use href="#sweep"/></svg>扫描<i class="tri"></i></button>
          <button class="btn plain cmd"><svg class="ic"><use href="#sweepblend"/></svg>扫描混合</button>
        </div>
      </div>
      <div class="grp-name d-flex align-items-center justify-content-center">形状<i class="tri"></i></div>
    </section>
    <section class="grp">
      <div class="grp-body d-flex">
        <div>
          <button class="btn plain cmd"><svg class="ic"><use href="#hole"/></svg>孔</button>
          <button class="btn plain cmd"><svg class="ic"><use href="#round"/></svg>倒圆角<i class="tri"></i></button>
          <button class="btn plain cmd"><svg class="ic"><use href="#chamfer"/></svg>倒角<i class="tri"></i></button>
        </div>
        <div>
          <button class="btn plain cmd"><svg class="ic"><use href="#draft"/></svg>拔模<i class="tri"></i></button>
          <button class="btn plain cmd"><svg class="ic"><use href="#shell"/></svg>壳</button>
          <button class="btn plain cmd"><svg class="ic"><use href="#rib"/></svg>筋<i class="tri"></i></button>
        </div>
      </div>
      <div class="grp-name d-flex align-items-center justify-content-center">工程<i class="tri"></i></div>
    </section>
    <section class="grp">
      <div class="grp-body d-flex">
        <button class="btn plain cmd-big"><svg class="ic-big"><use href="#pattern"/></svg><span>阵列</span><i class="tri"></i></button>
        <div>
          <button class="btn plain cmd"><svg class="ic"><use href="#mirror"/></svg>镜像</button>
          <button class="btn plain cmd"><svg class="ic"><use href="#trim"/></svg>修剪</button>
          <button class="btn plain cmd" disabled><svg class="ic"><use href="#merge"/></svg>合并</button>
        </div>
        <div>
          <button class="btn plain cmd" disabled><svg class="ic"><use href="#extend"/></svg>延伸</button>
          <button class="btn plain cmd" disabled><svg class="ic"><use href="#offset"/></svg>偏移</button>
          <button class="btn plain cmd"><svg class="ic"><use href="#meet"/></svg>相交</button>
        </div>
        <div>
          <button class="btn plain cmd"><svg class="ic"><use href="#project"/></svg>投影</button>
          <button class="btn plain cmd" disabled><svg class="ic"><use href="#thicken"/></svg>加厚</button>
          <button class="btn plain cmd"><svg class="ic"><use href="#solid"/></svg>实体化</button>
        </div>
        <div>
          <button class="btn plain cmd"><svg class="ic"><use href="#remove"/></svg>移除</button>
          <button class="btn plain cmd"><svg class="ic"><use href="#divide"/></svg>分割<i class="tri"></i></button>
          <button class="btn plain cmd"><svg class="ic"><use href="#unify"/></svg>一体化曲面</button>
        </div>
      </div>
      <div class="grp-name d-flex align-items-center justify-content-center">编辑<i class="tri"></i></div>
    </section>
    <section class="grp">
      <div class="grp-body d-flex">
        <button class="btn plain cmd-big"><svg class="ic-big"><use href="#boundary"/></svg><span>边界混合</span></button>
        <div>
          <button class="btn plain cmd"><svg class="ic"><use href="#fillsurf"/></svg>填充</button>
          <button class="btn plain cmd"><svg class="ic"><use href="#style"/></svg>样式</button>
          <button class="btn plain cmd"><svg class="ic"><use href="#freestyle"/></svg>自由式</button>
        </div>
      </div>
      <div class="grp-name d-flex align-items-center justify-content-center">曲面<i class="tri"></i></div>
    </section>
    <section class="grp">
      <div class="grp-body d-flex justify-content-center">
        <button class="btn plain cmd-big"><svg class="ic-big"><use href="#iface"/></svg><span>元件界面</span></button>
      </div>
      <div class="grp-name d-flex align-items-center justify-content-center">模型意图<i class="tri"></i></div>
    </section>
  </div>
</header>

<main class="d-flex flex-grow-1">
  <aside class="side flex-shrink-0">
    <div class="side-tabs d-flex">
      <button class="btn plain on" aria-label="模型树"><svg class="ic"><use href="#tabtree"/></svg></button>
      <button class="btn plain" aria-label="文件夹浏览器"><svg class="ic"><use href="#layers"/></svg></button>
      <button class="btn plain" aria-label="收藏夹"><svg class="ic"><use href="#favs"/></svg></button>
    </div>
    <div class="side-tools d-flex align-items-stretch">
      <button class="btn plain tool" aria-label="模型"><svg class="ic"><use href="#gcube"/></svg></button>
      <svg class="grip" height="36" aria-hidden="true"><g fill="#bfc3c3"><circle cx="2" cy="9" r="2"/><circle cx="2" cy="15" r="2"/><circle cx="2" cy="21" r="2"/><circle cx="2" cy="27" r="2"/></g></svg>
      <button class="btn plain tool" aria-label="全部展开"><svg class="ic"><use href="#expand"/></svg></button>
      <button class="btn plain tool" aria-label="全部折叠"><svg class="ic"><use href="#collapse"/></svg></button>
      <button class="btn plain tool tool-on" aria-label="树列"><svg class="ic"><use href="#cols"/></svg></button>
      <i class="tool-rule"></i>
      <button class="btn plain tool" aria-label="新建组"><svg class="ic"><use href="#newbox"/></svg></button>
      <i class="tool-rule"></i>
      <button class="btn plain tool" aria-label="树过滤器"><svg class="ic"><use href="#treefilt"/></svg></button>
      <button class="btn plain tool" aria-label="树列设置"><svg class="ic"><use href="#treecols"/></svg></button>
      <i class="tool-rule"></i>
      <button class="btn plain tool tool-slim" aria-label="更多"><svg width="14" height="12"><path d="M1 1l5 5-5 5M7 1l5 5-5 5" fill="none" stroke="#444" stroke-width="2"/></svg></button>
      <button class="btn plain tool" aria-label="首选项"><svg class="ic overflow-visible"><use href="#prefs"/></svg></button>
    </div>
    <div class="filter d-flex align-items-center">
      <svg class="ic"><use href="#funnel"/></svg>
      <div class="filter-box position-relative">
        <input type="text" class="form-control" aria-label="过滤模型树">
        <button class="btn plain position-absolute filter-clear" aria-label="清除"><svg class="ic"><path d="M6 6l11 11M17 6L6 17" stroke="#a9a9a9" stroke-width="2"/></svg></button>
      </div>
      <i class="tri ms-1"></i>
      <button class="btn plain ms-2" aria-label="添加"><svg class="ic"><path d="M11 4v17M3 12h17" stroke="#a3a3a3" stroke-width="5"/></svg></button>
    </div>
    <ul class="tree list-unstyled mb-0">
      <li class="root-item"><svg class="ic"><use href="#part"/></svg><span>KEY_HANDLE.PRT</span></li>
      <li class="has-arrow"><svg class="arrow"><path d="M2 0l11 7-11 7z" fill="#8c8c8c"/></svg><svg class="ic"><use href="#design"/></svg><span class="tag">设计项</span></li>
      <li><svg class="ic"><use href="#datum"/></svg><span class="tag">RIGHT</span></li>
      <li><svg class="ic"><use href="#datum"/></svg><span class="tag">TOP</span></li>
      <li><svg class="ic"><use href="#datum"/></svg><span class="tag">FRONT</span></li>
      <li><svg class="ic"><use href="#csys"/></svg><span class="tag">PRT_CSYS_DEF</span></li>
      <li class="has-arrow"><svg class="arrow"><path d="M0 2h13L6.500 13z" fill="#8c8c8c"/></svg><svg class="ic"><use href="#extrude"/></svg><span class="tag">拉伸 1</span></li>
      <li class="deep"><svg class="ic"><use href="#section"/></svg><span class="tag">截面 1</span></li>
      <li class="has-arrow"><svg class="arrow"><path d="M0 2h13L6.500 13z" fill="#8c8c8c"/></svg><svg class="ic"><use href="#extrude"/></svg><span class="tag">拉伸 2</span></li>
      <li class="deep"><svg class="ic"><use href="#section"/></svg><span class="tag">截面 1</span></li>
      <li class="has-arrow"><svg class="arrow"><path d="M2 0l11 7-11 7z" fill="#8c8c8c"/></svg><svg class="ic"><use href="#mirror"/></svg><span class="tag picked">镜像 1</span></li>
    </ul>
    <svg class="insert-mark" viewBox="0 0 378 10"><path d="M1 3h376v2H1z" fill="#a5dd90"/><path d="M1 5h376v3H1z" fill="#5dc63c"/><path d="M0 0h1l4 5-4 5H0zM378 0h-1l-4 5 4 5h1z" fill="#5dc63c"/></svg>
  </aside>

  <section class="stage flex-grow-1 position-relative">
    <svg class="position-absolute top-0 start-0 w-100 h-100" viewBox="0 0 1813 905" preserveAspectRatio="xMinYMin meet" role="img" aria-label="KEY_HANDLE 模型">
      <defs>
        <linearGradient id="steel" x1="0" y1="0" x2="0" y2="1">
          <stop offset="0" stop-color="#84909b"/><stop offset=".04" stop-color="#919ca9"/><stop offset=".12" stop-color="#9faaba"/><stop offset=".2" stop-color="#a9b6c8"/><stop offset=".26" stop-color="#b0bccd"/>
          <stop offset=".31" stop-color="#cbd8ea"/><stop offset=".35" stop-color="#dfecff"/><stop offset=".4" stop-color="#dbe8fa"/><stop offset=".45" stop-color="#b9c7d7"/><stop offset=".49" stop-color="#a3b1c1"/>
          <stop offset=".6" stop-color="#97a3b4"/><stop offset=".72" stop-color="#838f9a"/><stop offset=".8" stop-color="#717a84"/><stop offset=".87" stop-color="#666b76"/><stop offset=".93" stop-color="#575e68"/><stop offset="1" stop-color="#555c66"/>
        </linearGradient>
      </defs>
      <g transform="translate(-393 -239)">
        <g fill="#cfcac2" fill-opacity=".12">
          <path d="M950 741L2053 519 2131 799 1029 1021z"/><path d="M1485 490L1564 769 1597 1048 1518 769z"/>
        </g>
        <g transform="translate(1540.500 769.500) rotate(-11.400)" stroke-width="1.200">
          <path d="M-556-195A17.500 195 0 0 0-556 195H-278V-195z" fill="url(#steel)"/>
          <path d="M-556-195A17.500 195 0 0 0-556 195" fill="none" stroke="#111"/>
          <ellipse cx="-278" cy="0" rx="17.500" ry="195" fill="#565d67" stroke="#111"/>
          <path d="M-278-139A12.500 139 0 0 0-278 139H290V-139z" fill="url(#steel)"/>
          <path d="M-278-139A12.500 139 0 0 0-278 139" fill="none" stroke="#111"/>
          <path d="M278-195A17.500 195 0 0 0 278 195H556V-195z" fill="url(#steel)"/>
          <g stroke="#00c000" fill="none">
            <ellipse cx="556" cy="0" rx="17.500" ry="195" fill="#565d67"/>
            <ellipse cx="278" cy="0" rx="17.500" ry="195"/>
            <ellipse cx="278" cy="0" rx="12.500" ry="139"/>
            <path d="M278-195H556M278 195H556M290-137H568M269 133H546"/>
            <path d="M266 0H574" stroke-dasharray="9 2 2 2 2 2"/>
          </g>
          <path d="M-567 0H266" stroke="#7d4f56" stroke-width="1" fill="none" stroke-dasharray="9 2 2 2 2 2"/>
        </g>
        <g fill="none" stroke="#7d4f56">
          <path d="M950.500 740.500L2053 518.500 2131 798.500 1029 1020.500z"/><path d="M973.500 741.500L2075.500 519.500 2108.500 796.500 1005.500 1019.500z"/><path d="M1484.500 489.500L1563.500 768.500 1596.500 1047.500 1517.500 768.500z"/>
        </g>
        <path d="M1540 769L1536 735" stroke="#ff3030"/><path d="M1536 734l-2 18 8 0z" fill="#ff3030"/>
        <path d="M1540 769L1551 805" stroke="#30ff30"/><path d="M1551 806l-8-19 6-1z" fill="#30ff30"/>
        <path d="M1540 769L1494 779" stroke="#30ffff"/><path d="M1493 779l16-6 1 5z" fill="#30ffff"/>
        <g font-family="'Liberation Mono', monospace" font-size="16">
          <text x="1545" y="764" fill="#7d4f56">PRT_CSYS_DEF</text>
          <text x="1523" y="730" fill="#ff3030">X</text><text x="1555" y="819" fill="#30ff30">Y</text><text x="1477" y="795" fill="#30ffff">Z</text>
        </g>
      </g>
    </svg>
    <div class="view-bar d-flex">
      <button class="btn plain tool" aria-label="重新调整"><svg class="ic"><use href="#refit"/></svg></button>
      <button class="btn plain tool" aria-label="放大"><svg class="ic"><use href="#zoomin"/></svg></button>
      <button class="btn plain tool" aria-label="缩小"><svg class="ic"><use href="#zoomout"/></svg></button>
      <button class="btn plain tool" aria-label="重画"><svg class="ic"><use href="#repaint"/></svg></button>
      <button class="btn plain tool" aria-label="渲染"><svg class="ic"><use href="#render"/></svg></button>
      <button class="btn plain tool" aria-label="显示样式"><svg class="ic"><use href="#shade"/></svg></button>
      <button class="btn plain tool" aria-label="已保存方向"><svg class="ic"><use href="#saved"/></svg></button>
      <button class="btn plain tool" aria-label="视图管理器"><svg class="ic"><use href="#views"/></svg></button>
      <button class="btn plain tool" aria-label="透视图"><svg class="ic"><use href="#persp"/></svg></button>
      <button class="btn plain tool" aria-label="截面"><svg class="ic"><use href="#sections"/></svg></button>
      <button class="btn plain tool" aria-label="基准显示"><svg class="ic"><use href="#datums"/></svg></button>
      <button class="btn plain tool" aria-label="注释显示"><svg class="ic"><use href="#notes"/></svg></button>
      <button class="btn plain tool tool-on" aria-label="旋转中心"><svg class="ic"><use href="#spin"/></svg></button>
      <button class="btn plain tool" aria-label="仿真"><svg class="ic"><use href="#sim"/></svg></button>
      <button class="btn plain tool" aria-label="暂停"><svg class="ic"><use href="#pause"/></svg></button>
      <button class="btn plain tool" aria-label="结果"><svg class="ic"><use href="#result"/></svg></button>
    </div>
    <div class="note">1选择倒圆角</div>
  </section>
</main>

<svg class="note-arrow" width="150" height="290" aria-hidden="true">
  <rect x="5" y="10" width="130" height="43" rx="2" fill="none" stroke="#ed1c24" stroke-width="6"/>
  <path d="M47 283L80 84" stroke="#ed1c24" stroke-width="6" stroke-linecap="round"/>
  <path d="M83 62L90 87 80 82 69 86z" fill="#ed1c24"/>
</svg>
</body>
</html>
